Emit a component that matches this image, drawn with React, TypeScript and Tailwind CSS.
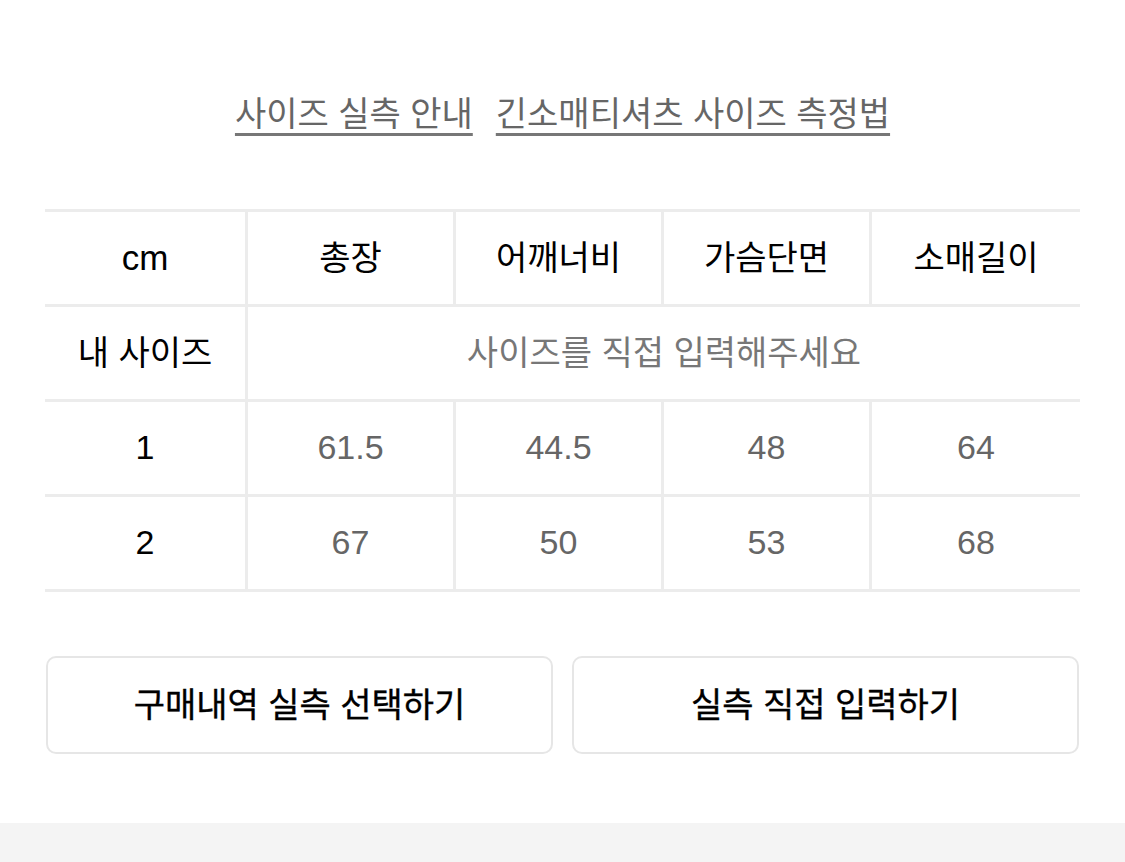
import React from "react";

const font = { fontFamily: '"Liberation Sans", "Noto Sans CJK KR", sans-serif' };

const headers = ["총장", "어깨너비", "가슴단면", "소매길이"];
const rows = [
  { label: "1", values: ["61.5", "44.5", "48", "64"] },
  { label: "2", values: ["67", "50", "53", "68"] },
];

export default function App() {
  return (
    <div className="w-[1125px] min-h-[862px] bg-white flex flex-col" style={font}>
      <div className="px-[45px] pt-[94px]">
        <div className="flex justify-center gap-[23px] text-[34px] leading-[40px] text-[#666]">
          <a className="underline decoration-[3px] underline-offset-[7px] decoration-[#777]">사이즈 실측 안내</a>
          <a className="underline decoration-[3px] underline-offset-[7px] decoration-[#777]">긴소매티셔츠 사이즈 측정법</a>
        </div>

        <div className="mt-[75px] grid grid-cols-[203px_repeat(4,1fr)] border-t-[3px] border-[#ececec] text-[34px]">
          <div className="h-[95px] flex items-center justify-center border-b-[3px] border-r-[3px] border-[#ececec] text-black text-[35px]">cm</div>
          {headers.map((h, i) => (
            <div
              key={h}
              className={
                i < 3
                  ? "h-[95px] flex items-center justify-center border-b-[3px] border-r-[3px] border-[#ececec] text-black"
                  : "h-[95px] flex items-center justify-center border-b-[3px] border-[#ececec] text-black"
              }
            >
              {h}
            </div>
          ))}
          <div className="h-[95px] flex items-center justify-center border-b-[3px] border-r-[3px] border-[#ececec] text-black">내 사이즈</div>
          <div className="col-span-4 h-[95px] flex items-center justify-center border-b-[3px] border-[#ececec] text-[#777]">사이즈를 직접 입력해주세요</div>
          {rows.map((r) => (
            <React.Fragment key={r.label}>
              <div className="h-[95px] flex items-center justify-center pb-[2px] border-b-[3px] border-r-[3px] border-[#ececec] text-black">{r.label}</div>
              {r.values.map((v, i) => (
                <div
                  key={i}
                  className={
                    i < 3
                      ? "h-[95px] flex items-center justify-center pb-[2px] border-b-[3px] border-r-[3px] border-[#ececec] text-[#666]"
                      : "h-[95px] flex items-center justify-center pb-[2px] border-b-[3px] border-[#ececec] text-[#666]"
                  }
                >
                  {v}
                </div>
              ))}
            </React.Fragment>
          ))}
        </div>

        <div className="mt-[64px] flex gap-[19px] mx-px">
          <button className="flex-1 h-[98px] rounded-[10px] border-2 border-[#e6e6e6] bg-white text-[34px] text-black font-normal [-webkit-text-stroke:0.35px_black] flex items-center justify-center">
            구매내역 실측 선택하기
          </button>
          <button className="flex-1 h-[98px] rounded-[10px] border-2 border-[#e6e6e6] bg-white text-[34px] text-black font-normal [-webkit-text-stroke:0.35px_black] flex items-center justify-center">
            실측 직접 입력하기
          </button>
        </div>
      </div>
      <div className="mt-[69px] flex-1 bg-[#f4f4f4] min-h-[40px]" />
    </div>
  );
}
